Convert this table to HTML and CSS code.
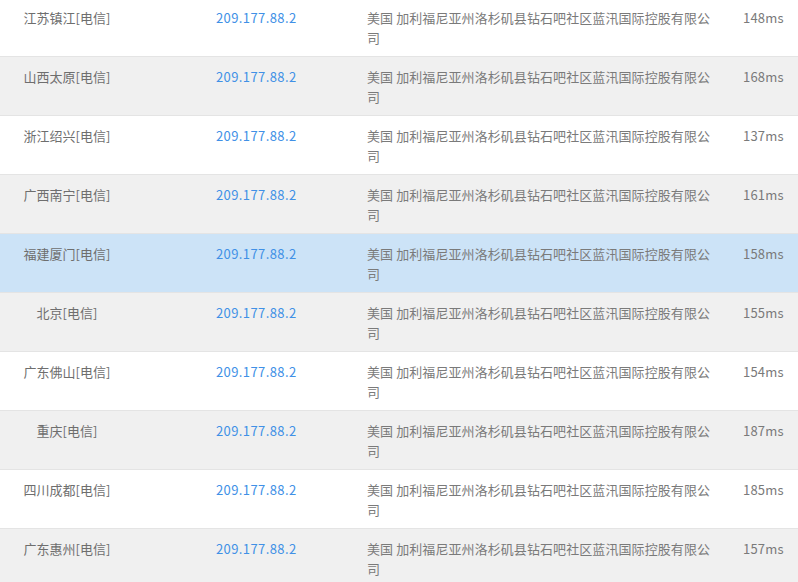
FILE: index.html
```html
<!DOCTYPE html>
<html lang="zh-CN">
<head>
    <meta charset="UTF-8">
    <title>Ping 结果</title>
    <link rel="stylesheet" href="styles.css">
</head>
<body>
    <div class="result-list">
        <div class="row">
            <div class="cell node">江苏镇江[电信]</div>
            <div class="cell ip">209.177.88.2</div>
            <div class="cell addr">美国 加利福尼亚州洛杉矶县钻石吧社区蓝汛国际控股有限公司</div>
            <div class="cell time">148ms</div>
        </div>
        <div class="row">
            <div class="cell node">山西太原[电信]</div>
            <div class="cell ip">209.177.88.2</div>
            <div class="cell addr">美国 加利福尼亚州洛杉矶县钻石吧社区蓝汛国际控股有限公司</div>
            <div class="cell time">168ms</div>
        </div>
        <div class="row">
            <div class="cell node">浙江绍兴[电信]</div>
            <div class="cell ip">209.177.88.2</div>
            <div class="cell addr">美国 加利福尼亚州洛杉矶县钻石吧社区蓝汛国际控股有限公司</div>
            <div class="cell time">137ms</div>
        </div>
        <div class="row">
            <div class="cell node">广西南宁[电信]</div>
            <div class="cell ip">209.177.88.2</div>
            <div class="cell addr">美国 加利福尼亚州洛杉矶县钻石吧社区蓝汛国际控股有限公司</div>
            <div class="cell time">161ms</div>
        </div>
        <div class="row active">
            <div class="cell node">福建厦门[电信]</div>
            <div class="cell ip">209.177.88.2</div>
            <div class="cell addr">美国 加利福尼亚州洛杉矶县钻石吧社区蓝汛国际控股有限公司</div>
            <div class="cell time">158ms</div>
        </div>
        <div class="row">
            <div class="cell node">北京[电信]</div>
            <div class="cell ip">209.177.88.2</div>
            <div class="cell addr">美国 加利福尼亚州洛杉矶县钻石吧社区蓝汛国际控股有限公司</div>
            <div class="cell time">155ms</div>
        </div>
        <div class="row">
            <div class="cell node">广东佛山[电信]</div>
            <div class="cell ip">209.177.88.2</div>
            <div class="cell addr">美国 加利福尼亚州洛杉矶县钻石吧社区蓝汛国际控股有限公司</div>
            <div class="cell time">154ms</div>
        </div>
        <div class="row">
            <div class="cell node">重庆[电信]</div>
            <div class="cell ip">209.177.88.2</div>
            <div class="cell addr">美国 加利福尼亚州洛杉矶县钻石吧社区蓝汛国际控股有限公司</div>
            <div class="cell time">187ms</div>
        </div>
        <div class="row">
            <div class="cell node">四川成都[电信]</div>
            <div class="cell ip">209.177.88.2</div>
            <div class="cell addr">美国 加利福尼亚州洛杉矶县钻石吧社区蓝汛国际控股有限公司</div>
            <div class="cell time">185ms</div>
        </div>
        <div class="row">
            <div class="cell node">广东惠州[电信]</div>
            <div class="cell ip">209.177.88.2</div>
            <div class="cell addr">美国 加利福尼亚州洛杉矶县钻石吧社区蓝汛国际控股有限公司</div>
            <div class="cell time">157ms</div>
        </div>
    </div>
</body>
</html>
```

FILE: styles.css
```css
body {
    margin: 0;
    font-family: 'Noto Sans CJK SC', 'Microsoft YaHei', sans-serif;
    font-size: 13px;
    line-height: 20px;
    color: #6e6e6e;
    background-color: #fff;
    overflow: hidden;
}
.result-list {
    margin-top: -2px;
}
.row {
    display: grid;
    grid-template-columns: 134px 223px 368px 73px;
    border-bottom: 1px solid #e4e4e4;
    background-color: #fff;
}
.row:nth-child(even) {
    background-color: #f0f0f0;
}
.row.active {
    background-color: #cce3f7;
}
.cell {
    padding: 10px 0 8px;
    min-height: 40px;
}
.node {
    text-align: center;
}
.ip {
    padding-left: 82px;
    color: #4090e6;
    letter-spacing: 0.4px;
}
.addr {
    padding-left: 10px;
    padding-right: 10px;
    color: #7a7a7a;
    letter-spacing: 0.08px;
}
.time {
    padding-left: 18px;
    color: #7a7a7a;
    letter-spacing: 0.2px;
}
```
